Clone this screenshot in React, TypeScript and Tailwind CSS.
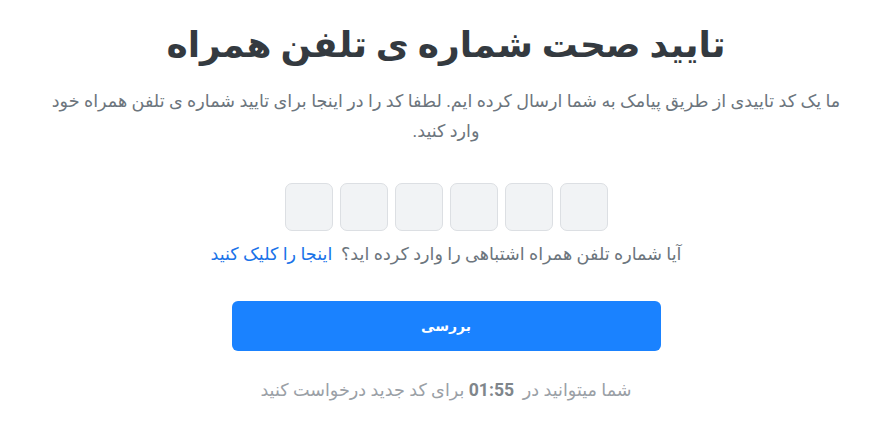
import { useState } from "react";

export default function App() {
  const [code, setCode] = useState<string[]>(["", "", "", "", "", ""]);

  return (
    <div
      dir="rtl"
      className="min-h-screen bg-white flex justify-center"
      style={{ fontFamily: 'Roboto, "DejaVu Sans", sans-serif' }}
    >
      <div className="w-[800px] flex flex-col items-center text-center pt-[18px]">
        <h1 className="text-[36px] leading-[54px] font-bold text-[#343a40]">
          تایید صحت شماره ی تلفن همراه
        </h1>
        <p className="mt-[14px] text-[17.6px] leading-[30px] text-[#6c757d]">
          ما یک کد تاییدی از طریق پیامک به شما ارسال کرده ایم. لطفا کد را در اینجا برای تایید شماره ی تلفن همراه خود وارد کنید.
        </p>

        <div dir="ltr" className="mt-[37px] flex gap-[7px]">
          {code.map((v, i) => (
            <input
              key={i}
              value={v}
              maxLength={1}
              onChange={(e) => {
                const next = [...code];
                next[i] = e.target.value;
                setCode(next);
              }}
              className="w-[48px] h-[48px] rounded-[7px] border border-[#dcdfe3] bg-[#f1f3f5] text-center text-xl text-[#343a40] outline-none"
            />
          ))}
        </div>

        <p className="mt-[8px] text-[17.6px] leading-[30px] text-[#6c757d]">
          آیا شماره تلفن همراه اشتباهی را وارد کرده اید؟&nbsp;{" "}
          <a href="#" className="text-[#1a73e8]">
            اینجا را کلیک کنید
          </a>
        </p>

        <button className="mt-[32px] w-[429px] h-[50px] rounded-[6px] bg-[#1a82ff] text-white text-[14px] font-bold">
          بررسی
        </button>

        <p className="mt-[24px] text-[17.6px] leading-[30px] text-[#9aa0a6]">
          شما میتوانید در&nbsp; <span className="font-bold text-[#80868b]">01:55</span> برای کد جدید درخواست کنید
        </p>
      </div>
    </div>
  );
}
